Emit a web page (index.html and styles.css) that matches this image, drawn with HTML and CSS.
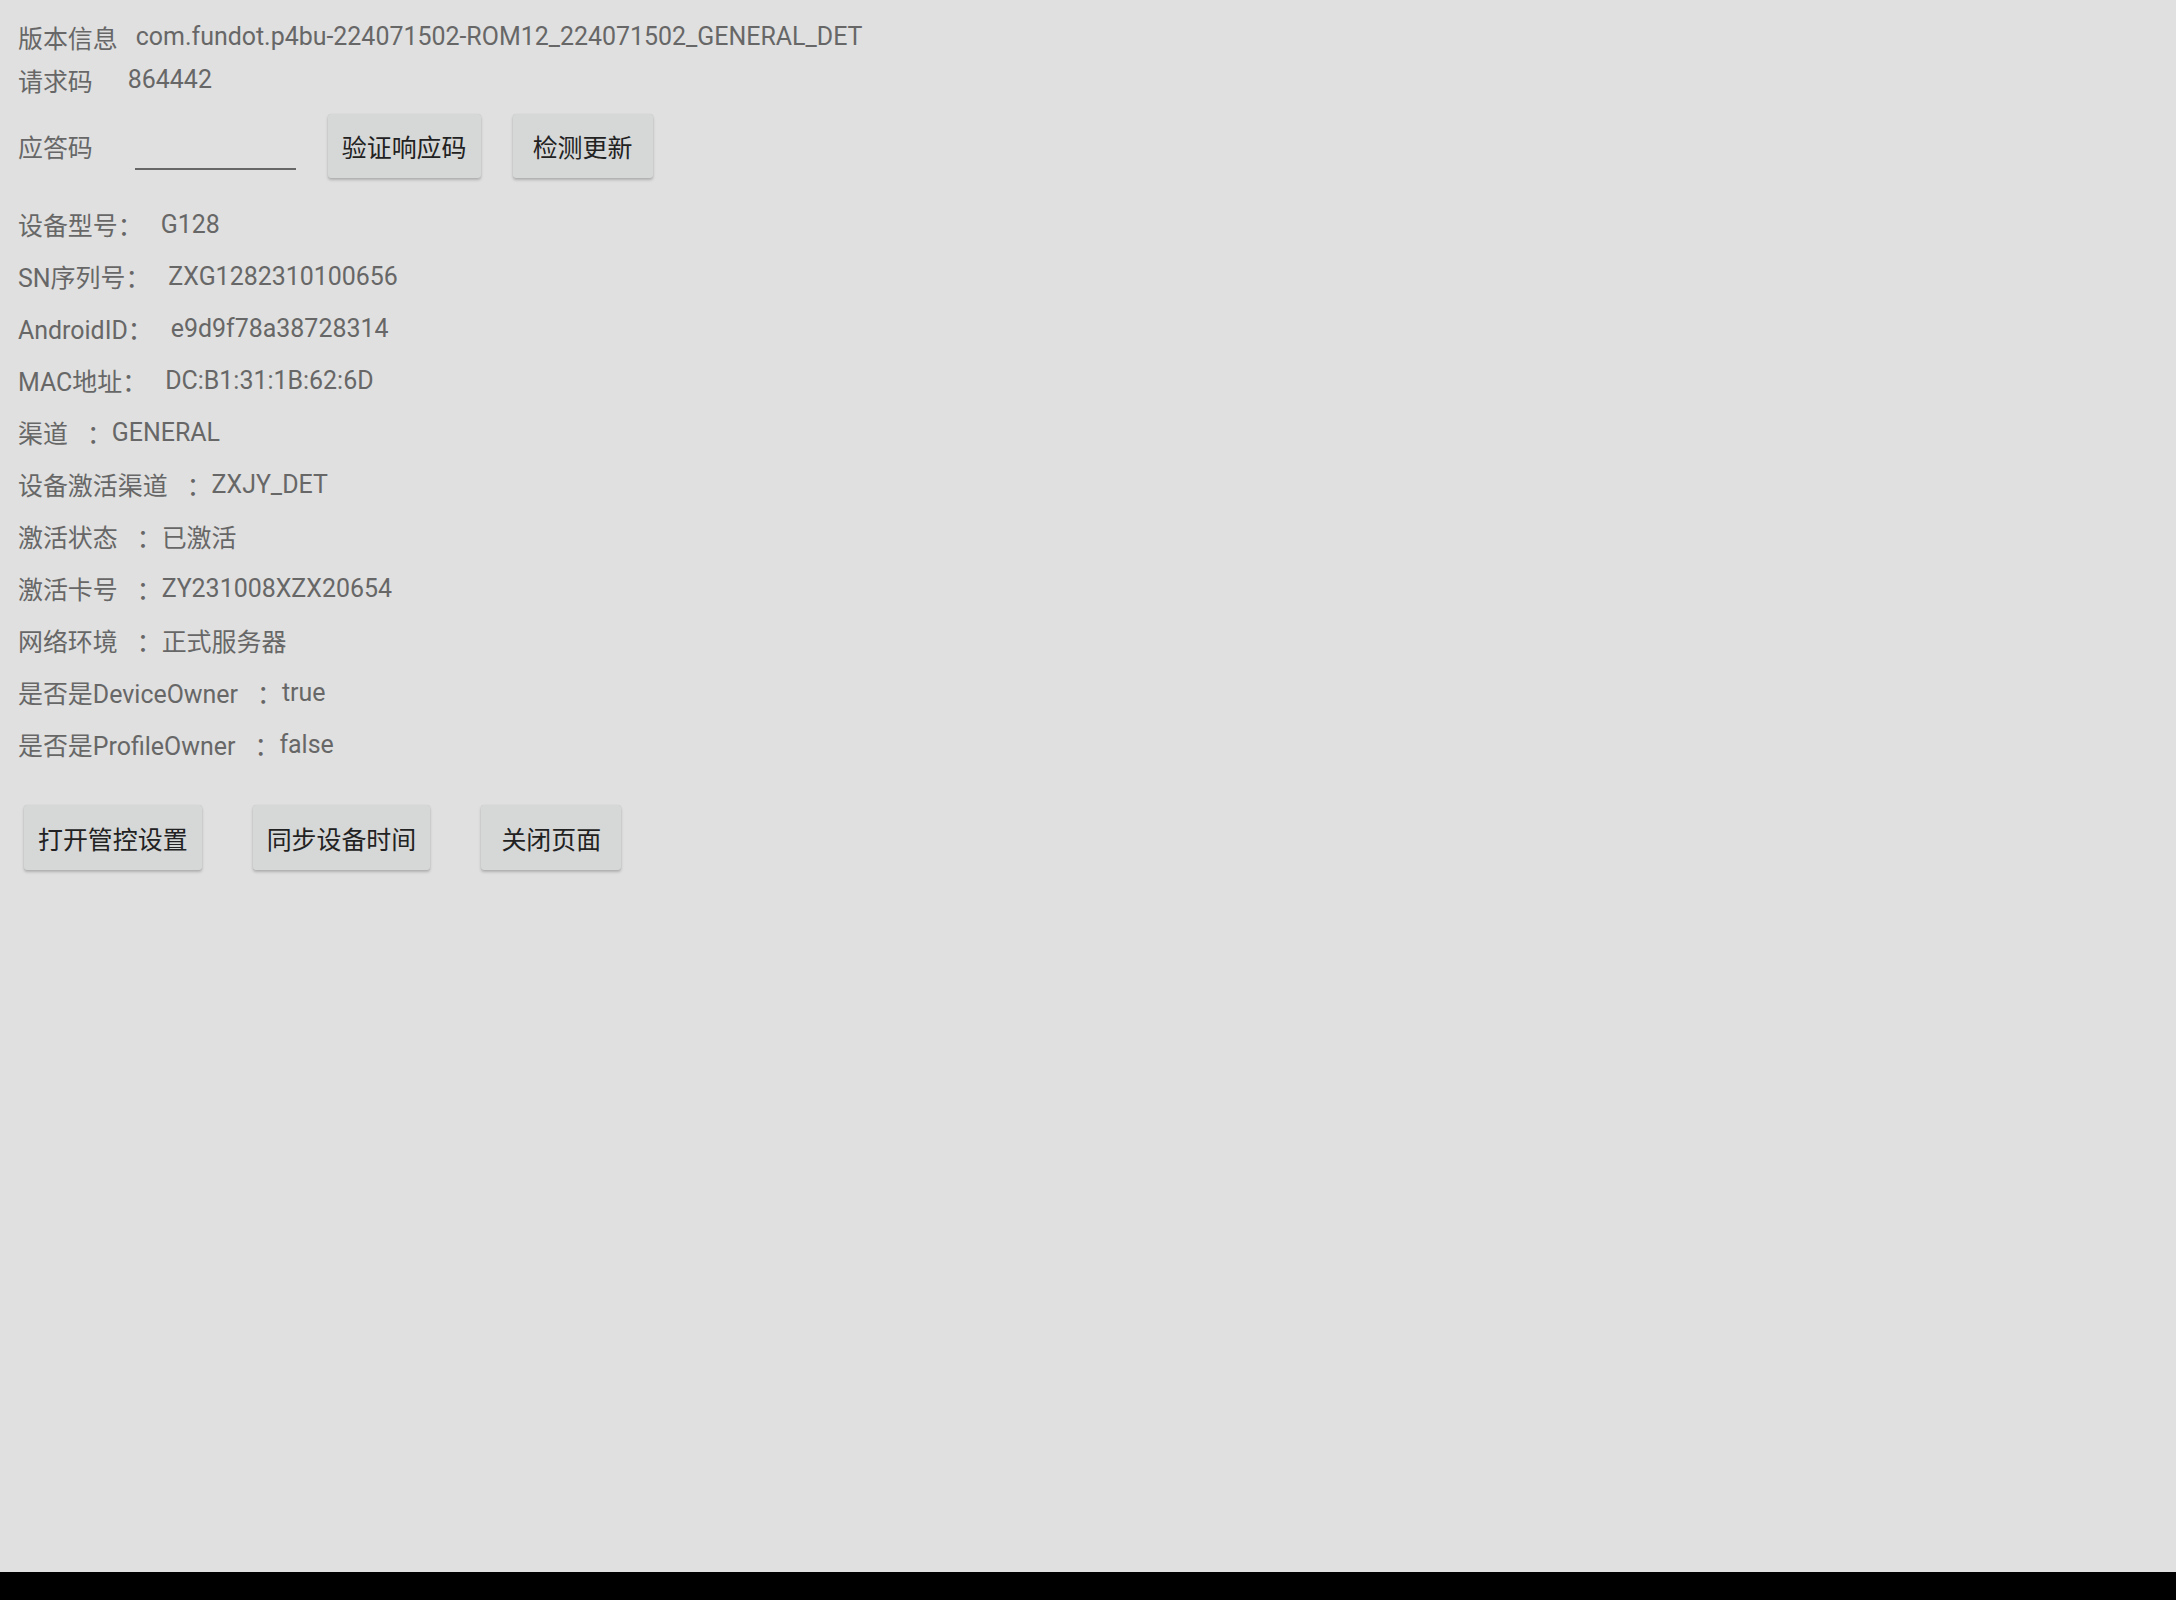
FILE: index.html
```html
<!DOCTYPE html>
<html lang="zh-CN">
<head>
<meta charset="utf-8">
<title>设备信息</title>
<link rel="stylesheet" href="styles.css">
</head>
<body>
<div class="screen">
  <main class="page">
    <div class="line"><span class="k">版本信息</span><span class="v g17">com.fundot.p4bu-224071502-ROM12_224071502_GENERAL_DET</span></div>
    <div class="line"><span class="k">请求码</span><span class="v g34">864442</span></div>

    <div class="answer-row">
      <span class="k">应答码</span>
      <input class="answer-input" type="text" aria-label="应答码">
      <button class="btn" type="button">验证响应码</button>
      <button class="btn" type="button">检测更新</button>
    </div>

    <ul class="info">
      <li class="row"><span>设备型号：</span><span class="v g17">G128</span></li>
      <li class="row"><span>SN序列号：</span><span class="v g17">ZXG1282310100656</span></li>
      <li class="row"><span>AndroidID：</span><span class="v g17">e9d9f78a38728314</span></li>
      <li class="row"><span>MAC地址：</span><span class="v g17">DC:B1:31:1B:62:6D</span></li>
      <li class="row"><span>渠道</span><span class="colon">：</span><span>GENERAL</span></li>
      <li class="row"><span>设备激活渠道</span><span class="colon">：</span><span>ZXJY_DET</span></li>
      <li class="row"><span>激活状态</span><span class="colon">：</span><span>已激活</span></li>
      <li class="row"><span>激活卡号</span><span class="colon">：</span><span>ZY231008XZX20654</span></li>
      <li class="row"><span>网络环境</span><span class="colon">：</span><span>正式服务器</span></li>
      <li class="row"><span>是否是DeviceOwner</span><span class="colon">：</span><span>true</span></li>
      <li class="row"><span>是否是ProfileOwner</span><span class="colon">：</span><span>false</span></li>
    </ul>

    <div class="actions">
      <button class="btn" type="button">打开管控设置</button>
      <button class="btn" type="button">同步设备时间</button>
      <button class="btn" type="button">关闭页面</button>
    </div>
  </main>
  <div class="navbar"></div>
</div>
</body>
</html>
```

FILE: styles.css
```css
* {
  box-sizing: border-box;
}

html, body {
  margin: 0;
  padding: 0;
  height: 100%;
}

body {
  background: #e0e0e0;
  font-family: Roboto, "Noto Sans CJK SC", sans-serif;
  font-size: 24.95px;
  color: #676767;
}

.screen {
  display: flex;
  flex-direction: column;
  height: 1600px;
}

.page {
  flex: 1;
  padding: 15px 0 0 18px;
  background: #e0e0e0;
}

.navbar {
  height: 28px;
  background: #000;
}

.line {
  display: flex;
  align-items: center;
  height: 43px;
  white-space: nowrap;
}

.g17 {
  margin-left: 18px;
}

.g34 {
  margin-left: 35px;
}

.answer-row {
  display: flex;
  align-items: center;
  height: 64px;
  margin-top: 13px;
}

.answer-input {
  align-self: flex-start;
  width: 161px;
  height: 56px;
  margin: 0 0 0 42px;
  padding: 0;
  border: none;
  border-bottom: 2px solid #676767;
  background: transparent;
  font: inherit;
  outline: none;
}

.answer-row .btn {
  margin-left: 32px;
}

.btn {
  height: 64px;
  min-width: 140px;
  padding: 0 14px;
  border: none;
  border-radius: 3px;
  background: #d6d7d7;
  color: #222;
  font-family: Roboto, "Noto Sans CJK SC", sans-serif;
  font-size: 24.95px;
  white-space: nowrap;
  box-shadow: 0 2px 3px rgba(0, 0, 0, 0.22), 0 0 1px rgba(0, 0, 0, 0.12);
}

.info {
  list-style: none;
  margin: 20px 0 0;
  padding: 0;
}

.row {
  display: flex;
  align-items: center;
  height: 52px;
  white-space: nowrap;
}

.colon {
  margin-left: 19px;
}

.actions {
  display: flex;
  gap: 51px;
  margin: 35px 0 0 6px;
}

.actions .btn {
  height: 65px;
}
```
